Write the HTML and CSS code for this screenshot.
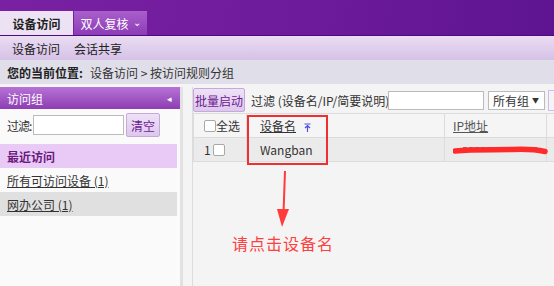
FILE: index.html
```html
<!DOCTYPE html>
<html lang="zh-CN">
<head>
  <meta charset="UTF-8" />
  <title>设备访问</title>
  <link rel="stylesheet" href="styles.css">
</head>
<body>
  <div class="top">
    <div class="tab active">设备访问</div>
    <div class="tab">双人复核 <span class="chev">&#8964;</span></div>
  </div>
  <div class="subnav">
    <span>设备访问</span>
    <span>会话共享</span>
  </div>
  <div class="crumbs">
    <b>您的当前位置:</b>
    <span>设备访问 &gt; 按访问规则分组</span>
  </div>

  <div class="main">
    <div class="side">
      <div class="side-head">访问组 <span class="fold">&#9666;</span></div>
      <div class="side-filter">
        <label>过滤:</label>
        <input type="text" class="side-input">
        <button class="btn">清空</button>
      </div>
      <div class="group recent">最近访问</div>
      <div class="group"><u>所有可访问设备 (1)</u></div>
      <div class="group gray"><u>网办公司 (1)</u></div>
    </div>

    <div class="content">
      <div class="toolbar">
        <button class="btn btn-start">批量启动</button>
        <span class="filter-label">过滤 (设备名/IP/简要说明)</span>
        <input type="text" class="filter-input">
        <div class="select">所有组 <span class="caret">&#9660;</span></div>
        <div class="extra"></div>
      </div>
      <table class="grid">
        <tr class="head">
          <td class="c1"><span class="chk"></span>全选</td>
          <td class="c2"><u>设备名</u>
            <svg class="sort" width="7" height="9" viewBox="0 0 7 9">
              <path d="M0.5 1 H6.5 M3.5 2.5 V9 M1 5 L3.5 2.5 L6 5" stroke="#5050e0" stroke-width="1.2" fill="none"/>
            </svg>
          </td>
          <td class="c3"><u>IP地址</u></td>
          <td class="c4"></td>
        </tr>
        <tr class="row">
          <td class="c1">1 <span class="chk"></span></td>
          <td class="c2">Wangban</td>
          <td class="c3">
            <svg class="scribble" width="96" height="12" viewBox="0 0 96 12">
              <path d="M10 4 H84" stroke="#555" stroke-width="1.5" stroke-dasharray="4 2" fill="none"/>
              <path d="M2 7 C20 5 40 6 60 5.5 C75 5 85 6 92 7.5" stroke="#ff2b2b" stroke-width="5.5" stroke-linecap="round" fill="none"/>
            </svg>
          </td>
          <td class="c4"></td>
        </tr>
      </table>
    </div>

    <div class="mark"></div>
    <svg class="arrow" width="16" height="58" viewBox="0 0 16 58">
      <path d="M10 0 L8.5 42" stroke="#ff3b3b" stroke-width="2" fill="none"/>
      <polygon points="2,38 14,38 7,56" fill="#ff3b3b"/>
    </svg>
    <div class="hint">请点击设备名</div>
  </div>
</body>
</html>
```

FILE: styles.css
```css
html, body {
  margin: 0;
  padding: 0;
  width: 554px;
  height: 286px;
  overflow: hidden;
  font-family: "Noto Sans CJK SC", "Liberation Sans", sans-serif;
  font-size: 12px;
  color: #333;
  background: #f4f4f4;
}
.top {
  height: 36px;
  box-sizing: border-box;
  padding-top: 12px;
  display: flex;
  align-items: flex-end;
  background: linear-gradient(100deg, #7a21a3 0%, #6d1b9b 55%, #5e1490 100%);
  border-bottom: 1px solid #4e0a7d;
}
.tab {
  height: 24px;
  width: 73px;
  box-sizing: border-box;
  display: flex;
  align-items: center;
  justify-content: center;
  color: #fff;
  font-size: 12px;
  background: linear-gradient(to bottom, #a95fcc, #8c3cb6);
  margin-right: 1px;
}
.tab.active {
  background: #ece2f4;
  color: #222;
  font-weight: bold;
}
.chev {
  font-size: 10px;
  margin-left: 4px;
  position: relative;
  top: -2px;
}
.subnav {
  height: 24px;
  display: flex;
  align-items: center;
  gap: 14px;
  padding-left: 12px;
  background: linear-gradient(to bottom, #ebddf3, #d5c1e6);
  color: #222;
}
.crumbs {
  height: 24px;
  display: flex;
  align-items: center;
  padding-left: 7px;
  background: #e0dfe9;
  color: #333;
}
.crumbs b {
  width: 83px;
  color: #222;
}
.main {
  position: relative;
  display: flex;
  margin-top: 3px;
  height: 199px;
}
.side {
  width: 180px;
  background: #fafafa;
  border-right: 3px solid #e2e2e2;
}
.side-head {
  height: 22px;
  display: flex;
  align-items: center;
  justify-content: space-between;
  padding: 0 8px 0 7px;
  color: #fff;
  font-size: 12px;
  background: linear-gradient(to bottom, #b772d6, #8d3eb3);
}
.fold {
  font-size: 9px;
}
.side-filter {
  display: flex;
  align-items: center;
  height: 28px;
  padding: 2px 0 0 7px;
}
.side-filter label {
  width: 26px;
  flex-shrink: 0;
  white-space: nowrap;
  letter-spacing: -1px;
}
.side-input {
  width: 91px;
  height: 20px;
  box-sizing: border-box;
  border: 1px solid #bbb;
  margin: 0 2px 0 0;
  flex-shrink: 0;
}
.btn {
  font-family: inherit;
  font-size: 12px;
  padding: 0 4px;
  height: 24px;
  background: linear-gradient(to bottom, #eee2f6, #dcc8ec);
  color: #6e1a93;
  border: 1px solid #c7a7dc;
  border-radius: 2px;
}
.group {
  height: 24px;
  display: flex;
  align-items: center;
  padding-left: 7px;
  width: 170px;
  color: #333;
}
.group.recent {
  margin-top: 5px;
  background: #e9c9f6;
  color: #6a1a7e;
  font-weight: bold;
}
.group.gray {
  background: #e0e0e0;
}
.content {
  flex: 1;
  margin-left: 9px;
  overflow: hidden;
  border-left: 1px solid #dcdcdc;
}
.toolbar {
  height: 26px;
  display: flex;
  align-items: center;
  white-space: nowrap;
}
.btn-start {
  height: 24px;
  width: 52px;
  padding: 0;
  flex-shrink: 0;
}
.filter-label {
  margin-left: 6px;
  width: 137px;
  flex-shrink: 0;
}
.filter-input {
  width: 96px;
  height: 19px;
  box-sizing: border-box;
  border: 1px solid #bbb;
  margin: 0;
  flex-shrink: 0;
}
.select {
  margin-left: 4px;
  width: 57px;
  height: 19px;
  box-sizing: border-box;
  border: 1px solid #bbb;
  background: #fff;
  display: flex;
  align-items: center;
  padding-left: 4px;
  flex-shrink: 0;
}
.caret {
  font-size: 7px;
  margin-left: 3px;
}
.extra {
  margin-left: 3px;
  width: 20px;
  height: 19px;
  border: 1px solid #d7b8ec;
  flex-shrink: 0;
}
.grid {
  border-collapse: collapse;
  width: 420px;
  table-layout: fixed;
}
.grid td {
  height: 23px;
  border: 1px solid #dcdcdc;
  padding: 0;
  white-space: nowrap;
}
.head td {
  background: #f5f5f5;
}
.row td {
  background: #ebebeb;
}
.c1 {
  width: 42px;
  padding-left: 10px !important;
}
.c2 {
  width: 184px;
  padding-left: 13px !important;
}
.c3 {
  width: 93px;
  padding-left: 8px !important;
  color: #555;
}
.chk {
  display: inline-block;
  width: 10px;
  height: 10px;
  border: 1px solid #a8a8a8;
  border-radius: 2px;
  background: #fff;
  vertical-align: -1px;
}
.sort {
  margin-left: 5px;
  vertical-align: -1px;
}
.scribble {
  display: block;
}
.mark {
  position: absolute;
  left: 247px;
  top: 28px;
  width: 77px;
  height: 46px;
  border: 2px solid #f03030;
}
.arrow {
  position: absolute;
  left: 275px;
  top: 84px;
}
.hint {
  position: absolute;
  left: 232px;
  top: 144px;
  font-size: 16px;
  letter-spacing: 1px;
  color: #ff4040;
}
```
